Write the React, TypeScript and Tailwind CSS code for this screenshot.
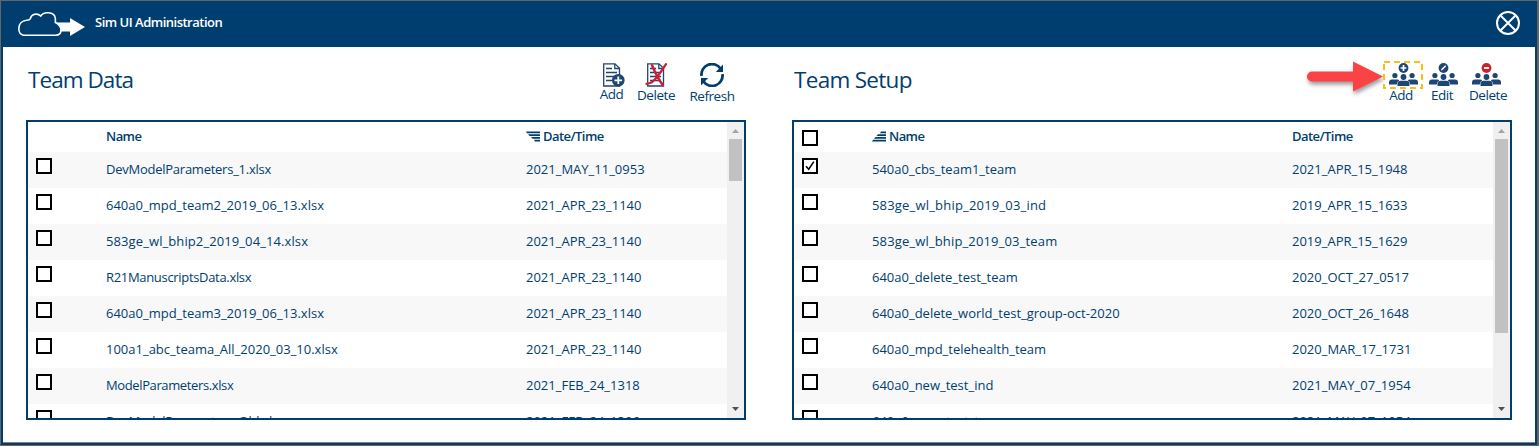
import type { ReactNode } from "react";

type Row = { name: string; date: string; checked?: boolean; tracking?: string };

const dataRows: Row[] = [
  { name: "DevModelParameters_1.xlsx", date: "2021_MAY_11_0953", tracking: "tracking-[-0.25px]" },
  { name: "640a0_mpd_team2_2019_06_13.xlsx", date: "2021_APR_23_1140" },
  { name: "583ge_wl_bhip2_2019_04_14.xlsx", date: "2021_APR_23_1140", tracking: "tracking-[0.1px]" },
  { name: "R21ManuscriptsData.xlsx", date: "2021_APR_23_1140", tracking: "tracking-[-0.32px]" },
  { name: "640a0_mpd_team3_2019_06_13.xlsx", date: "2021_APR_23_1140" },
  { name: "100a1_abc_teama_All_2020_03_10.xlsx", date: "2021_APR_23_1140" },
  { name: "ModelParameters.xlsx", date: "2021_FEB_24_1318", tracking: "tracking-[-0.38px]" },
  { name: "DevModelParameters_Old.xlsx", date: "2021_FEB_24_1306", tracking: "tracking-[-0.25px]" },
];

const setupRows: Row[] = [
  { name: "540a0_cbs_team1_team", date: "2021_APR_15_1948", checked: true },
  { name: "583ge_wl_bhip_2019_03_ind", date: "2019_APR_15_1633", tracking: "tracking-[0.19px]" },
  { name: "583ge_wl_bhip_2019_03_team", date: "2019_APR_15_1629", tracking: "tracking-[0.15px]" },
  { name: "640a0_delete_test_team", date: "2020_OCT_27_0517" },
  { name: "640a0_delete_world_test_group-oct-2020", date: "2020_OCT_26_1648" },
  { name: "640a0_mpd_telehealth_team", date: "2020_MAR_17_1731" },
  { name: "640a0_new_test_ind", date: "2021_MAY_07_1954" },
  { name: "640a0_new_test_team", date: "2021_MAY_07_1954" },
];

function Checkbox({ checked }: { checked?: boolean }) {
  return (
    <div className="h-4 w-4 shrink-0 border-2 border-black bg-white">
      {checked && (
        <svg viewBox="0 0 12 12" className="h-3 w-3" fill="none" stroke="#000" strokeWidth="1.5">
          <path d="M2 6.2 L4.7 9.2 L9.8 1.6" />
        </svg>
      )}
    </div>
  );
}

function SortIcon({ asc }: { asc?: boolean }) {
  return asc ? (
    <svg width="14" height="11" viewBox="0 0 14 11" className="mr-[3px]" fill="#003e70">
      <path d="M9 0.500h5v1.700h-6zM6 3.300h8v1.700h-9.500zM3.500 6h10.500v1.700h-12zM1 8.800h13v1.700h-14z" />
    </svg>
  ) : (
    <svg width="14" height="11" viewBox="0 0 14 11" className="mr-[3px]" fill="#003e70">
      <path d="M0 0.500h14v1.700h-13zM2 3.300h12v1.700h-10.500zM5 6h9v1.700h-7.500zM8 8.800h6v1.700h-5z" />
    </svg>
  );
}

function ScrollBar({ children }: { children: ReactNode }) {
  return (
    <div className="flex w-[17px] shrink-0 flex-col items-center bg-[#f0f0f0]">
      <svg width="17" height="17" className="shrink-0" fill="#a3a3a3">
        <path d="M5 11h7L8.500 7z" />
      </svg>
      {children}
      <svg width="17" height="17" className="mt-auto shrink-0" fill="#505050">
        <path d="M5 6h7L8.500 10z" />
      </svg>
    </div>
  );
}

function Table({ rows, setup }: { rows: Row[]; setup?: boolean }) {
  return (
    <div className="flex h-[300px] w-[720px] shrink-0 overflow-hidden border-2 border-[#003e70] bg-white">
      <div className="flex-1 text-[13px] leading-[18px] text-[#003e70]">
        <div className="flex h-[30px] pl-2 font-semibold tracking-[-0.55px]">
          <div className="w-[70px] pt-2">{setup && <Checkbox />}</div>
          <div className="flex h-7 w-[420px] items-center">
            {setup && <SortIcon asc />}
            Name
          </div>
          <div className="flex h-7 items-center">
            {!setup && <SortIcon />}
            Date/Time
          </div>
        </div>
        {rows.map((r) => (
          <div key={r.name} className="flex h-9 pl-2 odd:bg-white even:bg-[#f8f8f8]">
            <div className="w-[70px] pt-1.5">
              <Checkbox checked={r.checked} />
            </div>
            <div className="w-[420px] pt-2">
              <span className={r.tracking}>{r.name}</span>
            </div>
            <div className="pt-2">
              <span>{r.date}</span>
            </div>
          </div>
        ))}
      </div>
      <ScrollBar>
        {setup ? (
          <div className="h-[194px] w-[13px] bg-[#c1c1c1]" />
        ) : (
          <div className="h-[42px] w-[13px] bg-[#c1c1c1]" />
        )}
      </ScrollBar>
    </div>
  );
}

function DocShape() {
  return (
    <g fill="none" stroke="#1d4675" strokeWidth="1.300">
      <path d="M0.700 0.800h11.300l4.500 4.500v17.700h-15.800z" fill="#fff" />
      <path d="M11.800 1v4.500h4.500" />
      <path d="M3 5.500h6M3 9.500h11M3 13.500h11M3 17.500h11" strokeWidth="1.400" />
    </g>
  );
}

function AddDoc() {
  return (
    <svg width="23" height="24" viewBox="0 0 23 24">
      <DocShape />
      <circle cx="15.300" cy="17.300" r="6.300" fill="#1d4675" />
      <path d="M15.300 13.500v7.600M11.500 17.300h7.600" stroke="#fff" strokeWidth="1.800" />
    </svg>
  );
}

function DeleteDoc() {
  return (
    <svg width="23" height="24" viewBox="-2 0 23 24">
      <DocShape />
      <path d="M5 2.200C7.500 8 11 16 15.800 22" fill="none" stroke="#d0202c" strokeWidth="2.500" strokeLinecap="round" />
      <path d="M19 1.200C14.500 7.500 11 14.500 4.500 19.500Q2 20.500 -0.500 20.800" fill="none" stroke="#d0202c" strokeWidth="2.300" strokeLinecap="round" />
    </svg>
  );
}

function RefreshIcon() {
  return (
    <svg width="24" height="24" viewBox="0 0 24 24" fill="none" stroke="#003e70" strokeWidth="2.800">
      <path d="M1.500 12.800A10.500 10.500 0 0 1 20.500 5.500" />
      <path d="M22.500 11.200A10.500 10.500 0 0 1 3.500 18.500" />
      <path d="M23 1.500v7.500h-7.200z" fill="#003e70" stroke="none" />
      <path d="M1 22.500v-7.500h7.200z" fill="#003e70" stroke="none" />
    </svg>
  );
}

function PeopleIcon({ kind }: { kind: "add" | "edit" | "delete" }) {
  return (
    <svg width="29" height="24" viewBox="0 0 29 24" fill="#1d4675">
      <circle cx="5.900" cy="12.500" r="2.600" />
      <circle cx="23.100" cy="12.500" r="2.600" />
      <circle cx="14.500" cy="14" r="2.900" />
      <path d="M0 21.500v-2.200q0-2.900 3-2.900h5q2 0 2.200 1-2.200 1-2.400 4.100z" />
      <path d="M29 21.500v-2.200q0-2.900-3-2.900h-5q-2 0-2.200 1 2.200 1 2.400 4.100z" />
      <path d="M8.500 23v-2.300q0-3 3.200-3h5.600q3.200 0 3.200 3v2.300z" />
      <circle cx="14.500" cy="5" r="4.900" fill={kind === "delete" ? "#d0202c" : "#1d4675"} />
      {kind === "add" && <path d="M14.500 2.100v5.800M11.600 5h5.800" stroke="#fff" strokeWidth="1.700" />}
      {kind === "edit" && <path d="M12 7.500l.5-1.700L16.200 2.200l1 1-3.600 3.700z" fill="#fff" />}
      {kind === "delete" && <path d="M12 5h5" stroke="#fff" strokeWidth="1.900" />}
    </svg>
  );
}

function CloudLogo() {
  return (
    <svg width="67" height="26" viewBox="0 0 67 26">
      <path
        d="M5.500 24.200C2 23.500 0.800 21 0.800 17.500C0.800 13 4 9.800 8.500 9.300C10.500 9.200 11.700 9 12.300 7.500C13.500 2.800 19.500 1.800 22.700 5C25 1 34 0.200 36.700 5C38 7.500 37.500 9 37.300 11.500C40.500 13 43 15.500 43 19C43 22.500 40.500 24.200 37.500 24.200Z"
        fill="none"
        stroke="#fff"
        strokeWidth="1.600"
      />
      <path d="M37 11.500h15V7L67 16L52 25V20.500h-9Q42.500 14 37 11.500z" fill="#fff" />
    </svg>
  );
}

function CalloutArrow() {
  return (
    <svg width="82" height="40" viewBox="0 0 82 40" className="shrink-0 drop-shadow-[1px_3px_2px_rgba(0,0,0,0.4)]">
      <path d="M7 12.500h41V2.500L78 17.500L48 32.500V22.500H7a5 5 0 0 1 0-10z" fill="#fb4244" />
    </svg>
  );
}

function Label({ children }: { children: ReactNode }) {
  return <span className="text-[13.5px] leading-[18px] tracking-[-0.45px] text-[#003e70]">{children}</span>;
}

export default function App() {
  return (
    <div className="h-[446px] w-[1539px] overflow-hidden bg-[#656565] pl-[1px] pr-[2px] pt-[1px] font-['Open_Sans','Noto_Sans',sans-serif]">
      <div className="flex h-[444px] flex-col border-2 border-t-0 border-[#003e70] bg-white">
        <header className="flex h-[46px] shrink-0 items-center bg-[#003e70] pl-[15px] pr-[15px]">
          <CloudLogo />
          <h1 className="mb-[3px] ml-[10px] text-[13px] font-semibold tracking-[-0.5px] text-white">Sim UI Administration</h1>
          <svg width="24" height="24" viewBox="0 0 24 24" className="mb-[2px] ml-auto" fill="none" stroke="#fff" strokeWidth="2">
            <circle cx="12" cy="12" r="11" />
            <path d="M4.500 4.500l15 15M19.500 4.500l-15 15" />
          </svg>
        </header>
        <main className="flex gap-[46px] pl-[23px]">
          <section className="w-[720px]">
            <div className="flex h-[73px]">
              <h2 className="w-[567px] pl-[2px] pt-[15px] text-[22.5px] leading-[36px] tracking-[-0.95px] text-[#003e70]">Team Data</h2>
              <div className="flex items-start pt-4">
                <button className="flex w-[37px] flex-col items-center">
                  <span className="ml-[6px] flex"><AddDoc /></span>
                  <span className="-mt-[2px] flex"><Label>Add</Label></span>
                </button>
                <button className="ml-[4px] flex w-[44px] flex-col items-center">
                  <DeleteDoc />
                  <span className="-mt-[1px] flex"><Label>Delete</Label></span>
                </button>
                <button className="ml-[9px] flex w-[50px] flex-col items-center">
                  <RefreshIcon />
                  <Label>Refresh</Label>
                </button>
              </div>
            </div>
            <Table rows={dataRows} />
          </section>
          <section className="w-[720px]">
            <div className="flex h-[73px]">
              <h2 className="w-[513px] pl-[2px] pt-[15px] text-[22.5px] leading-[36px] tracking-[-0.7px] text-[#003e70]">Team Setup</h2>
              <div className="flex items-start">
                <div className="flex w-[78px] pt-3"><CalloutArrow /></div>
                <button className="relative flex w-[40px] flex-col items-center pt-4">
                  <PeopleIcon kind="add" />
                  <span className="-mt-[1px] mr-[4px] flex"><Label>Add</Label></span>
                  <svg width="40" height="28" className="absolute left-0 top-[14px]" fill="none" stroke="#f9c010" strokeWidth="2">
                    <rect x="1" y="1" width="38" height="26" strokeDasharray="6 4" />
                  </svg>
                </button>
                <button className="flex w-[40px] flex-col items-center pt-4">
                  <PeopleIcon kind="edit" />
                  <span className="-mt-[1px] mr-[2px] flex"><Label>Edit</Label></span>
                </button>
                <button className="flex w-[46px] flex-col items-center pt-4">
                  <PeopleIcon kind="delete" />
                  <span className="-mt-[1px] ml-[4px] flex"><Label>Delete</Label></span>
                </button>
              </div>
            </div>
            <Table rows={setupRows} setup />
          </section>
        </main>
        <div className="mt-auto h-[1px] bg-[#808080]" />
      </div>
    </div>
  );
}
